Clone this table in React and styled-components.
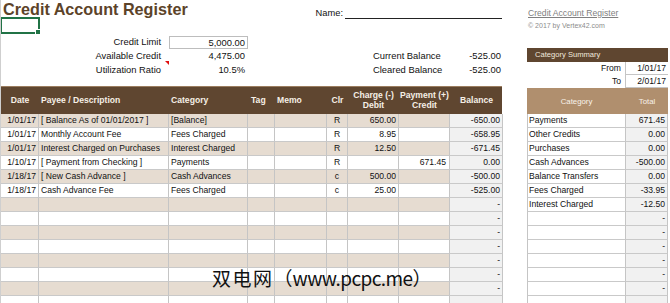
import React from 'react';
import styled, { createGlobalStyle } from 'styled-components';

const GlobalStyle = createGlobalStyle`
  html, body {
    margin: 0;
    padding: 0;
    background: #fff;
  }
  body {
    font-family: "Liberation Sans", Arial, sans-serif;
    color: #111;
  }
`;

const COLS = '38px 130px 79px 27px 52px 21px 51px 51px 53px';

const Page = styled.div`
  position: relative;
  width: 670px;
  height: 303px;
  overflow: hidden;
  display: flex;
  gap: 25px;
  font-size: 8.6px;
  border-left: 1px solid #cfcfcf;
  box-sizing: border-box;
`;

const LeftCol = styled.div`
  width: 501px;
  flex: none;
`;

const TopBar = styled.div`
  display: flex;
  justify-content: space-between;
  height: 17px;
`;

const Title = styled.div`
  font-size: 16.2px;
  line-height: 18px;
  font-weight: bold;
  color: #5c4329;
  padding-left: 2px;
`;

const NameGroup = styled.div`
  display: flex;
  padding-top: 8px;
  gap: 2px;
  font-size: 9.3px;
`;

const NameLabel = styled.span`
  line-height: 10px;
`;

const NameLine = styled.span`
  width: 157px;
  height: 10px;
  border-bottom: 1px solid #222;
`;

const SelRow = styled.div`
  height: 18px;
`;

const SelCell = styled.div`
  position: relative;
  width: 40px;
  height: 17px;
  margin-left: -1px;
  box-sizing: border-box;
  border: 2px solid #217346;
`;

const Handle = styled.span`
  position: absolute;
  right: -3px;
  bottom: -3px;
  width: 4px;
  height: 4px;
  background: #217346;
  border: 1px solid #fff;
`;

const InfoGrid = styled.div`
  display: grid;
  grid-template-columns: 167px 80px 125px 87px 42px;
  grid-auto-rows: 14px;
  align-items: center;
  font-size: 9.4px;
`;

const Label = styled.div`
  position: relative;
  text-align: ${(p) => p.$align || 'right'};
  padding-right: ${(p) => (p.$align === 'left' ? 0 : 7)}px;
  line-height: 14px;
  height: 14px;
  white-space: nowrap;
`;

const Value = styled.div`
  text-align: right;
  padding-right: ${(p) => p.$pad ?? 3}px;
  line-height: 14px;
`;

const InputBox = styled.div`
  height: 13px;
  margin-left: 1px;
  box-sizing: border-box;
  border: 1px solid #bdbdbd;
  text-align: right;
  padding-right: 2px;
  line-height: 11px;
`;

const CommentMark = styled.span`
  position: absolute;
  right: -1px;
  top: -2px;
  width: 0;
  height: 0;
  border-top: 4px solid #e01010;
  border-left: 4px solid transparent;
`;

const Table = styled.div`
  margin-top: 9px;
`;

const HeadRow = styled.div`
  display: grid;
  grid-template-columns: ${COLS};
  height: 28px;
  box-sizing: border-box;
  background: #5f4630;
  border-top: 1px solid #9b7d5f;
  color: #f6efe6;
  font-weight: bold;
`;

const HeadCell = styled.div`
  display: flex;
  align-items: center;
  justify-content: ${(p) => p.$justify || 'flex-start'};
  text-align: center;
  line-height: 9.5px;
  padding: 0 ${(p) => p.$pad ?? 2}px;
  white-space: pre;
`;

const Row = styled.div`
  display: grid;
  grid-template-columns: ${COLS};
  height: 14px;
`;

const Cell = styled.div`
  box-sizing: border-box;
  height: 14px;
  line-height: 13px;
  border-right: 1px solid #c5c5c5;
  border-bottom: 1px solid #c9c9c9;
  background: ${(p) => (p.$gray ? '#f1f1f1' : p.$shade ? '#e6dcd1' : '#fff')};
  text-align: ${(p) => p.$align || 'left'};
  padding: 0 ${(p) => p.$pad ?? 2}px;
  white-space: nowrap;
  overflow: hidden;
`;

const RightCol = styled.div`
  width: 141px;
  flex: none;
`;

const Link = styled.div`
  margin-top: 8px;
  line-height: 10px;
  color: #808080;
  text-decoration: underline;
  padding-left: 1px;
`;

const Copy = styled.div`
  font-size: 7px;
  line-height: 8px;
  color: #8c8c8c;
  margin-top: 4px;
  padding-left: 1px;
`;

const SumBand = styled.div`
  margin-top: 18px;
  height: 14px;
  line-height: 14px;
  background: #5f4630;
  color: #f1e8de;
  font-size: 7.6px;
  padding-left: 8px;
`;

const RangeRow = styled.div`
  display: grid;
  grid-template-columns: 98px 43px;
  height: 13px;
  line-height: 12px;
`;

const RangeLabel = styled.div`
  text-align: right;
  padding-right: 4px;
`;

const RangeValue = styled.div`
  text-align: right;
  padding-right: 2px;
  border-left: 1px solid #c5c5c5;
  border-bottom: 1px solid #c5c5c5;
  box-sizing: border-box;
`;

const SumHead = styled.div`
  display: grid;
  grid-template-columns: 99px 42px;
  height: 26px;
  background: #b08f6e;
  color: #f8f2ea;
  font-size: 7.8px;
  align-items: center;
  text-align: center;
`;

const SumRow = styled.div`
  display: grid;
  grid-template-columns: 99px 42px;
  height: 14px;
`;

const SumCell = styled(Cell)`
  border-left: ${(p) => (p.$first ? '1px solid #c5c5c5' : 'none')};
  padding: 0 ${(p) => (p.$first ? 1 : 2)}px;
`;

const Watermark = styled.div`
  position: absolute;
  left: 211px;
  top: 267px;
  font-family: "Noto Sans CJK SC", sans-serif;
  font-size: 19px;
  line-height: 22px;
  color: #111;
  white-space: nowrap;
`;

const Wide = styled.span`
  letter-spacing: 1.5px;
`;

const Narrow = styled.span`
  letter-spacing: -0.6px;
`;

const entries = [
  ['1/01/17', '[ Balance As of 01/01/2017 ]', '[Balance]', 'R', '650.00', '', '-650.00'],
  ['1/01/17', 'Monthly Account Fee', 'Fees Charged', 'R', '8.95', '', '-658.95'],
  ['1/01/17', 'Interest Charged on Purchases', 'Interest Charged', 'R', '12.50', '', '-671.45'],
  ['1/10/17', '[ Payment from Checking ]', 'Payments', 'R', '', '671.45', '0.00'],
  ['1/18/17', '[ New Cash Advance ]', 'Cash Advances', 'c', '500.00', '', '-500.00'],
  ['1/18/17', 'Cash Advance Fee', 'Fees Charged', 'c', '25.00', '', '-525.00'],
];

const summary = [
  ['Payments', '671.45'],
  ['Other Credits', '0.00'],
  ['Purchases', '0.00'],
  ['Cash Advances', '-500.00'],
  ['Balance Transfers', '0.00'],
  ['Fees Charged', '-33.95'],
  ['Interest Charged', '-12.50'],
];

const App = () => {
  const rows = [...entries];
  while (rows.length < 13) rows.push(['', '', '', '', '', '', '-']);
  rows.push(['', '', '', '', '', '', '']);
  const sumRows = [...summary];
  while (sumRows.length < 13) sumRows.push(['', '-']);
  sumRows.push(['', '']);

  return (
    <>
      <GlobalStyle />
      <Page>
        <LeftCol>
          <TopBar>
            <Title>Credit Account Register</Title>
            <NameGroup>
              <NameLabel>Name:</NameLabel>
              <NameLine />
            </NameGroup>
          </TopBar>
          <SelRow>
            <SelCell>
              <Handle />
            </SelCell>
          </SelRow>
          <InfoGrid>
            <Label>Credit Limit</Label>
            <InputBox>5,000.00</InputBox>
            <div />
            <div />
            <div />
            <Label>Available Credit</Label>
            <Value>4,475.00</Value>
            <div />
            <Label $align="left">Current Balance</Label>
            <Value $pad={1}>-525.00</Value>
            <Label>
              Utilization Ratio
              <CommentMark />
            </Label>
            <Value>10.5%</Value>
            <div />
            <Label $align="left">Cleared Balance</Label>
            <Value $pad={1}>-525.00</Value>
          </InfoGrid>

          <Table>
            <HeadRow>
              <HeadCell $justify="center">Date</HeadCell>
              <HeadCell>Payee / Description</HeadCell>
              <HeadCell>Category</HeadCell>
              <HeadCell $pad={3}>Tag</HeadCell>
              <HeadCell>Memo</HeadCell>
              <HeadCell $justify="center">Clr</HeadCell>
              <HeadCell $justify="center" $pad={0}>{'Charge (-)\nDebit'}</HeadCell>
              <HeadCell $justify="center" $pad={0}>{'Payment (+)\nCredit'}</HeadCell>
              <HeadCell $justify="center">Balance</HeadCell>
            </HeadRow>
            {rows.map((r, i) => {
              const shade = i % 2 === 0;
              return (
                <Row key={i}>
                  <Cell $shade={shade} $align="right">{r[0]}</Cell>
                  <Cell $shade={shade}>{r[1]}</Cell>
                  <Cell $shade={shade}>{r[2]}</Cell>
                  <Cell $shade={shade} />
                  <Cell $shade={shade} />
                  <Cell $shade={shade} $align="center">{r[3]}</Cell>
                  <Cell $shade={shade} $align="right">{r[4]}</Cell>
                  <Cell $shade={shade} $align="right" $pad={3}>{r[5]}</Cell>
                  <Cell $gray $align="right" $pad={2}>{r[6]}</Cell>
                </Row>
              );
            })}
          </Table>
        </LeftCol>

        <RightCol>
          <Link>Credit Account Register</Link>
          <Copy>© 2017 by Vertex42.com</Copy>
          <SumBand>Category Summary</SumBand>
          <RangeRow>
            <RangeLabel>From</RangeLabel>
            <RangeValue>1/01/17</RangeValue>
          </RangeRow>
          <RangeRow>
            <RangeLabel>To</RangeLabel>
            <RangeValue>2/01/17</RangeValue>
          </RangeRow>
          <SumHead>
            <span>Category</span>
            <span>Total</span>
          </SumHead>
          {sumRows.map((r, i) => (
            <SumRow key={i}>
              <SumCell $first>{r[0]}</SumCell>
              <SumCell $gray $align="right">{r[1]}</SumCell>
            </SumRow>
          ))}
        </RightCol>

        <Watermark>
          <Wide>双电网</Wide>（<Narrow>www.pcpc.me</Narrow>）
        </Watermark>
      </Page>
    </>
  );
};

export default App;
